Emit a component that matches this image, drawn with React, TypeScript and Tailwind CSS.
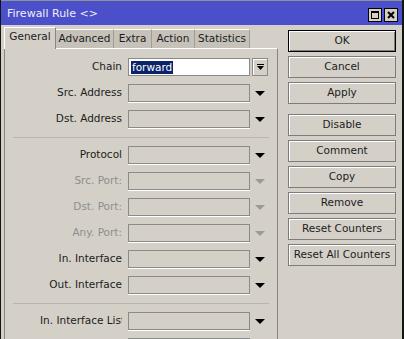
import React from "react";

type Row =
  | { kind: "sep" }
  | { kind: "field"; label: string; disabled?: boolean; value?: string; chain?: boolean };

const rows: Row[] = [
  { kind: "field", label: "Chain", value: "forward", chain: true },
  { kind: "field", label: "Src. Address" },
  { kind: "field", label: "Dst. Address" },
  { kind: "sep" },
  { kind: "field", label: "Protocol" },
  { kind: "field", label: "Src. Port:", disabled: true },
  { kind: "field", label: "Dst. Port:", disabled: true },
  { kind: "field", label: "Any. Port:", disabled: true },
  { kind: "field", label: "In. Interface" },
  { kind: "field", label: "Out. Interface" },
  { kind: "sep" },
  { kind: "field", label: "In. Interface List" },
  { kind: "field", label: "Out. Interface List" },
];

const tabs = ["Advanced", "Extra", "Action", "Statistics"];
const tabWidths = ["w-[58px]", "w-[38px]", "w-[43px]", "w-[55px]"];

const buttons = ["OK", "Cancel", "Apply", "Disable", "Comment", "Copy", "Remove", "Reset Counters", "Reset All Counters"];

function Triangle({ disabled }: { disabled?: boolean }) {
  return (
    <svg width="10" height="5" viewBox="0 0 10 5">
      <polygon points="0,0 10,0 5,5" fill={disabled ? "#9a9a9a" : "#000"} />
    </svg>
  );
}

function Field({ row }: { row: Extract<Row, { kind: "field" }> }) {
  return (
    <div className="flex items-center h-[18px] shrink-0">
      <div
        className={`ml-[35px] w-[82px] text-right whitespace-nowrap overflow-hidden ${
          row.disabled ? "text-[#8e8e8e]" : "text-[#1c1c1c]"
        }`}
      >
        {row.label}
      </div>
      <div
        className={`ml-[6px] w-[122px] h-[18px] border flex items-center pl-[2px] ${
          row.chain ? "bg-white border-[#8a8a8a]" : "border-[#8a8a8a] shadow-[0_1px_0_#fff]"
        }`}
      >
        {row.value && <span className="bg-[#0a246a] text-white leading-[13px] px-px">{row.value}</span>}
      </div>
      <div className="ml-[2px] w-[16px] h-[18px] flex items-center justify-center">
        {row.chain ? (
          <div className="w-[16px] h-[18px] border border-[#8a8a8a] shadow-[inset_1px_1px_0_#fff] flex flex-col items-center justify-center gap-px">
            <div className="w-[7px] h-px bg-black" />
            <svg width="7" height="4" viewBox="0 0 7 4">
              <polygon points="0,0 7,0 3.5,4" fill="#000" />
            </svg>
          </div>
        ) : (
          <Triangle disabled={row.disabled} />
        )}
      </div>
    </div>
  );
}

export default function App() {
  return (
    <div className="w-[404px] h-[339px] overflow-hidden bg-[#d4d0c8] font-['DejaVu_Sans',sans-serif] text-[10.5px] flex flex-col border-l border-r-2 border-[#141414]">
      <div className="h-px shrink-0 bg-[#8c9494]" />
      <div className="h-[24px] shrink-0 bg-[#4b4fc9] flex items-start justify-between pl-[6px] pr-[4px]">
        <span className="text-[#eeeef6] pt-[6px] leading-[13px] text-[11px]">Firewall Rule &lt;&gt;</span>
        <div className="flex gap-[2px] mt-[7px]">
          <div className="w-[14px] h-[14px] bg-[#d4d0c8] border border-black flex items-center justify-center">
            <div className="w-[8px] h-[8px] border border-black border-t-2" />
          </div>
          <div className="w-[14px] h-[14px] bg-[#d4d0c8] border border-black flex items-center justify-center">
            <svg width="8" height="8" viewBox="0 0 8 8">
              <path d="M1 1 L7 7 M7 1 L1 7" stroke="#000" strokeWidth="2" />
            </svg>
          </div>
        </div>
      </div>

      <div className="flex flex-1 min-h-0">
        <div className="ml-[3px] w-[274px] flex flex-col min-h-0">
          <div className="mt-[2px] flex items-end h-[21px] shrink-0 relative z-10">
            <div className="h-[22px] w-[52px] -mb-px bg-[#d4d0c8] border-l border-t border-white border-r border-r-[#8a867e] flex items-center justify-center text-[#1c1c1c] pb-[3px]">
              General
            </div>
            {tabs.map((t, i) => (
              <div
                key={t}
                className={`h-[19px] ${tabWidths[i]} bg-[#c6c2ba] border-t border-white border-r border-r-[#a09c94] flex items-center justify-center text-[#1c1c1c]`}
              >
                {t}
              </div>
            ))}
          </div>
          <div className="flex-1 min-h-0 overflow-hidden border border-[#8a867e] border-t-white border-b-0 pt-[9px] flex flex-col gap-[8px]">
            {rows.map((r, i) =>
              r.kind === "sep" ? (
                <div key={i} className="h-[2px] shrink-0 mx-[8px] border-b border-[#b9b5ad]" />
              ) : (
                <Field key={i} row={r} />
              )
            )}
          </div>
        </div>

        <div className="ml-[10px] w-[108px] mt-[5px] flex flex-col gap-[4px]">
          {buttons.map((b, i) => (
            <div
              key={b}
              className={`h-[22px] shrink-0 flex items-center justify-center whitespace-nowrap text-[#1c1c1c] ${
                i === 0
                  ? "border border-black shadow-[inset_1px_1px_0_#fff,inset_-1px_-1px_0_#808080]"
                  : "border border-[#7c7c7c] shadow-[inset_1px_1px_0_#fff]"
              } ${i === 3 ? "mt-[6px]" : ""}`}
            >
              {b}
            </div>
          ))}
        </div>
      </div>
    </div>
  );
}
